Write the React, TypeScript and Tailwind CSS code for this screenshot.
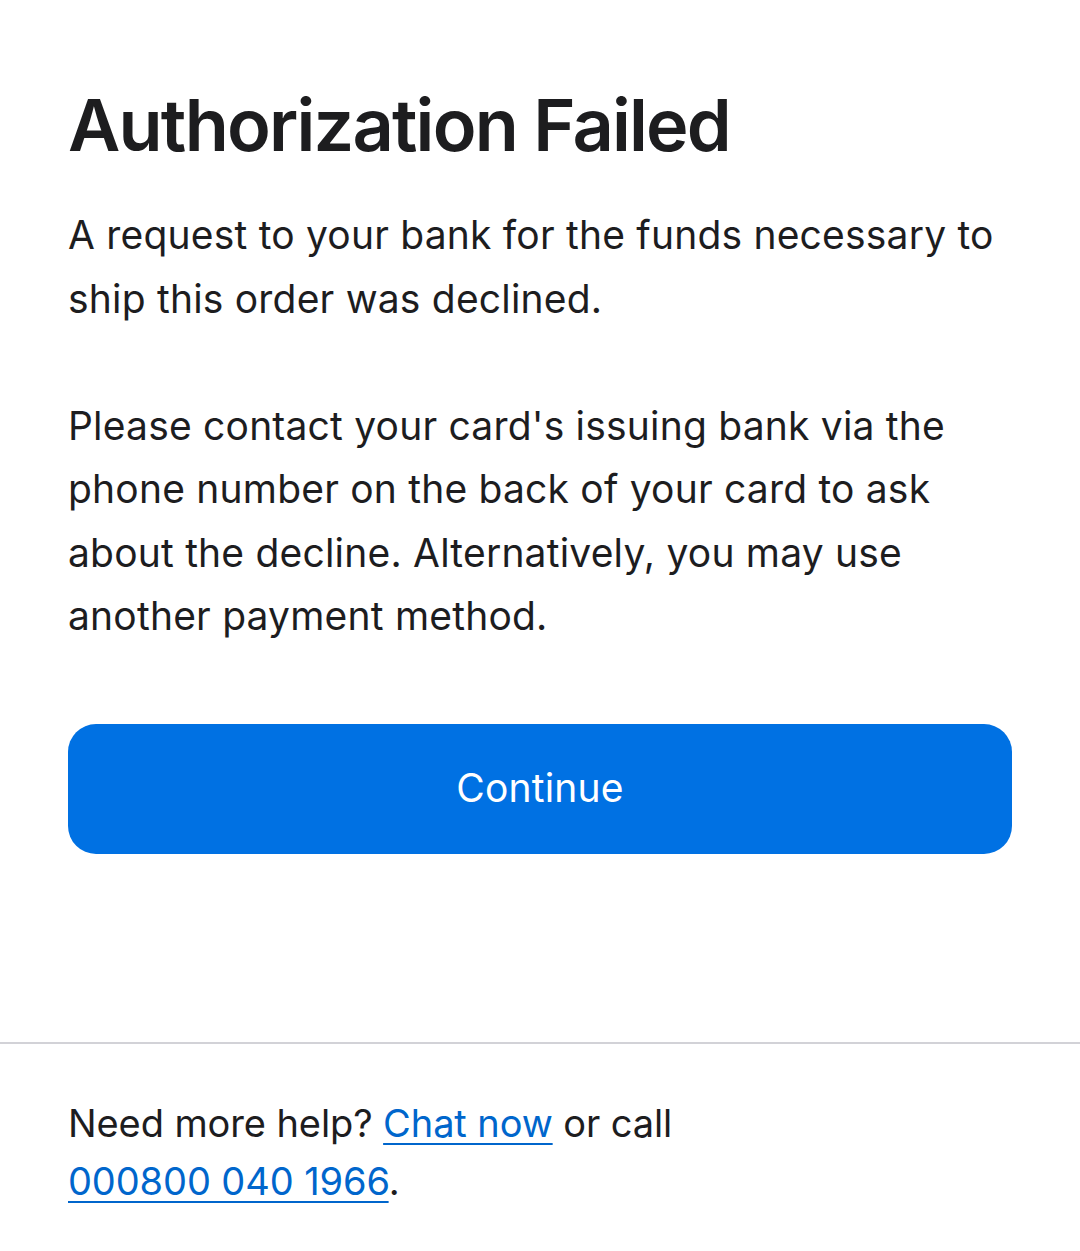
export default function App() {
  return (
    <div
      className="min-h-[1251px] bg-white text-[#1d1d1f]"
      style={{ fontFamily: "Inter, 'Noto Sans', sans-serif" }}
    >
      <main className="px-[68px] pt-[80px] pb-[188px]">
        <h1 className="text-[72px] font-semibold leading-[90px] tracking-[-1.8px]">
          Authorization Failed
        </h1>
        <div className="mt-[33px] text-[39px] leading-[63.5px] tracking-[0.2px]">
          <p>
            A request to your bank for the funds necessary to ship this order
            was declined.
          </p>
          <p className="mt-[63.5px]">
            Please contact your card's issuing bank via the phone number on the
            back of your card to ask about the decline. Alternatively, you may
            use another payment method.
          </p>
        </div>
        <button className="mt-[76px] flex h-[130px] w-full items-center justify-center rounded-[28px] bg-[#0071e3] text-[39px] tracking-[0.2px] text-white">
          Continue
        </button>
      </main>
      <footer className="border-t-2 border-[#d2d2d7] px-[68px] pt-[50px] pb-[40px]">
        <p className="max-w-[640px] text-[38px] leading-[58px] tracking-[-0.1px]">
          Need more help?{" "}
          <a href="#" className="text-[#0066cc] underline decoration-2 underline-offset-[6px]">
            Chat now
          </a>{" "}
          or call{" "}
          <a href="#" className="text-[#0066cc] underline decoration-2 underline-offset-[6px]">
            000800 040 1966
          </a>
          .
        </p>
      </footer>
    </div>
  );
}
